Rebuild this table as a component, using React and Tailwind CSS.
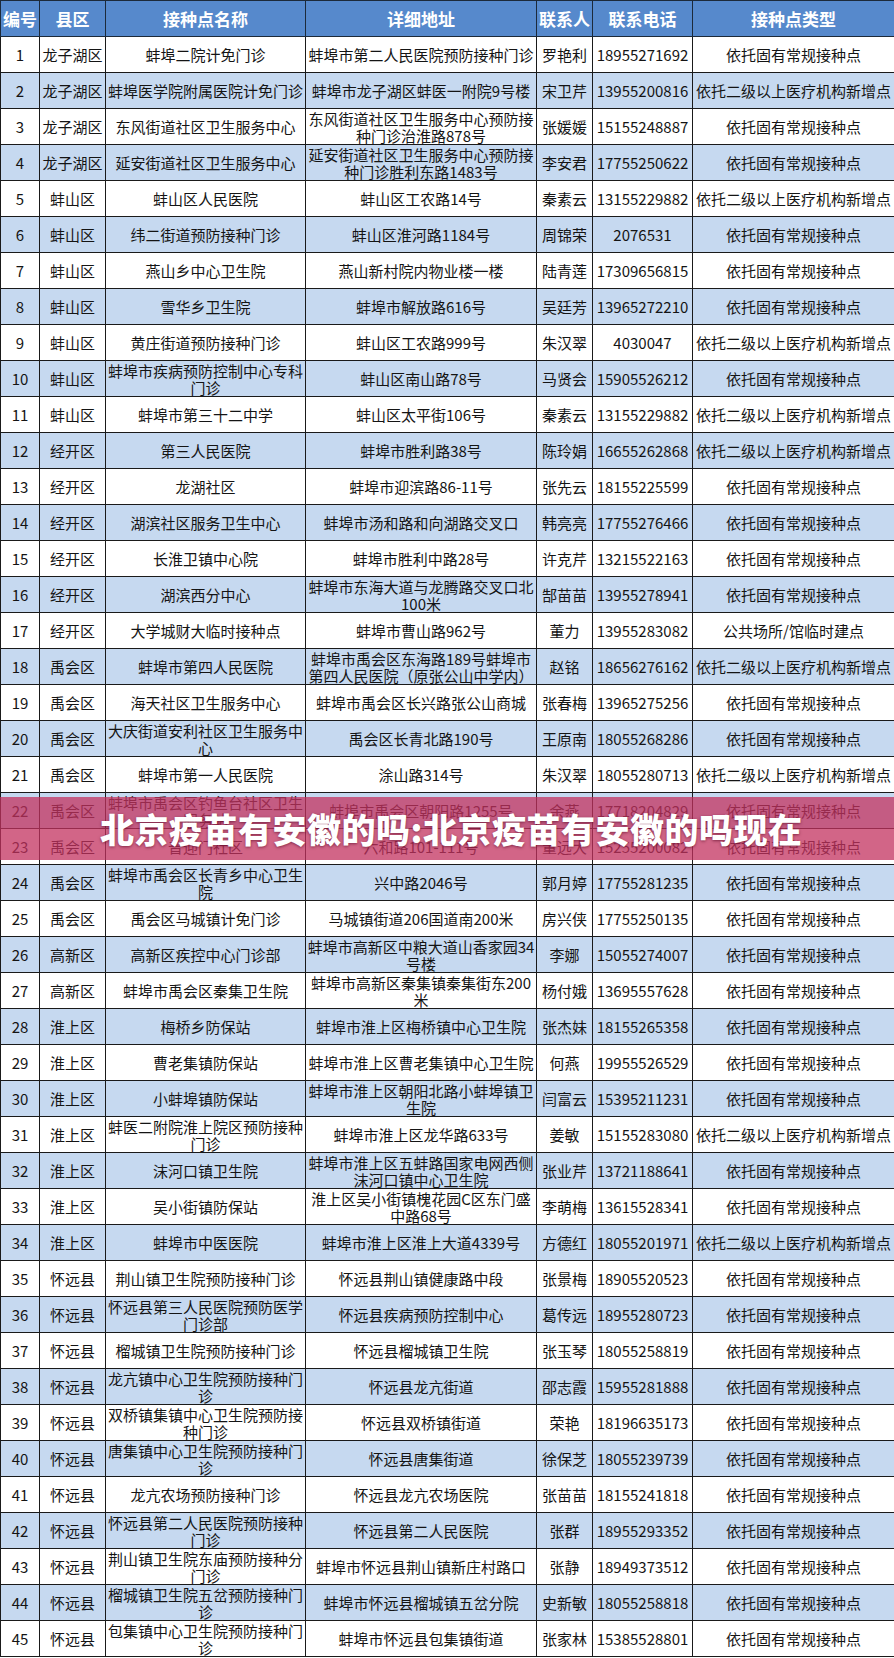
import React from "react"

const rows = [
  ["1", "龙子湖区", "蚌埠二院计免门诊", "蚌埠市第二人民医院预防接种门诊", "罗艳利", "18955271692", "依托固有常规接种点"],
  ["2", "龙子湖区", "蚌埠医学院附属医院计免门诊", "蚌埠市龙子湖区蚌医一附院9号楼", "宋卫芹", "13955200816", "依托二级以上医疗机构新增点"],
  ["3", "龙子湖区", "东风街道社区卫生服务中心", "东风街道社区卫生服务中心预防接种门诊治淮路878号", "张媛媛", "15155248887", "依托固有常规接种点"],
  ["4", "龙子湖区", "延安街道社区卫生服务中心", "延安街道社区卫生服务中心预防接种门诊胜利东路1483号", "李安君", "17755250622", "依托固有常规接种点"],
  ["5", "蚌山区", "蚌山区人民医院", "蚌山区工农路14号", "秦素云", "13155229882", "依托二级以上医疗机构新增点"],
  ["6", "蚌山区", "纬二街道预防接种门诊", "蚌山区淮河路1184号", "周锦荣", "2076531", "依托固有常规接种点"],
  ["7", "蚌山区", "燕山乡中心卫生院", "燕山新村院内物业楼一楼", "陆青莲", "17309656815", "依托固有常规接种点"],
  ["8", "蚌山区", "雪华乡卫生院", "蚌埠市解放路616号", "吴廷芳", "13965272210", "依托固有常规接种点"],
  ["9", "蚌山区", "黄庄街道预防接种门诊", "蚌山区工农路999号", "朱汉翠", "4030047", "依托二级以上医疗机构新增点"],
  ["10", "蚌山区", "蚌埠市疾病预防控制中心专科门诊", "蚌山区南山路78号", "马贤会", "15905526212", "依托固有常规接种点"],
  ["11", "蚌山区", "蚌埠市第三十二中学", "蚌山区太平街106号", "秦素云", "13155229882", "依托二级以上医疗机构新增点"],
  ["12", "经开区", "第三人民医院", "蚌埠市胜利路38号", "陈玲娟", "16655262868", "依托二级以上医疗机构新增点"],
  ["13", "经开区", "龙湖社区", "蚌埠市迎滨路86-11号", "张先云", "18155225599", "依托固有常规接种点"],
  ["14", "经开区", "湖滨社区服务卫生中心", "蚌埠市汤和路和向湖路交叉口", "韩亮亮", "17755276466", "依托固有常规接种点"],
  ["15", "经开区", "长淮卫镇中心院", "蚌埠市胜利中路28号", "许克芹", "13215522163", "依托固有常规接种点"],
  ["16", "经开区", "湖滨西分中心", "蚌埠市东海大道与龙腾路交叉口北100米", "郜苗苗", "13955278941", "依托固有常规接种点"],
  ["17", "经开区", "大学城财大临时接种点", "蚌埠市曹山路962号", "董力", "13955283082", "公共场所/馆临时建点"],
  ["18", "禹会区", "蚌埠市第四人民医院", "蚌埠市禹会区东海路189号蚌埠市第四人民医院（原张公山中学内）", "赵铭", "18656276162", "依托二级以上医疗机构新增点"],
  ["19", "禹会区", "海天社区卫生服务中心", "蚌埠市禹会区长兴路张公山商城", "张春梅", "13965275256", "依托固有常规接种点"],
  ["20", "禹会区", "大庆街道安利社区卫生服务中心", "禹会区长青北路190号", "王原南", "18055268286", "依托固有常规接种点"],
  ["21", "禹会区", "蚌埠市第一人民医院", "涂山路314号", "朱汉翠", "18055280713", "依托二级以上医疗机构新增点"],
  ["22", "禹会区", "蚌埠市禹会区钓鱼台社区卫生服务站", "蚌埠市禹会区朝阳路1255号", "余燕", "17718204829", "依托固有常规接种点"],
  ["23", "禹会区", "普迎门社区", "六和路101-111号", "董远大", "15255200082", "依托固有常规接种点"],
  ["24", "禹会区", "蚌埠市禹会区长青乡中心卫生院", "兴中路2046号", "郭月婷", "17755281235", "依托固有常规接种点"],
  ["25", "禹会区", "禹会区马城镇计免门诊", "马城镇街道206国道南200米", "房兴侠", "17755250135", "依托固有常规接种点"],
  ["26", "高新区", "高新区疾控中心门诊部", "蚌埠市高新区中粮大道山香家园34号楼", "李娜", "15055274007", "依托固有常规接种点"],
  ["27", "高新区", "蚌埠市禹会区秦集卫生院", "蚌埠市高新区秦集镇秦集街东200米", "杨付娥", "13695557628", "依托固有常规接种点"],
  ["28", "淮上区", "梅桥乡防保站", "蚌埠市淮上区梅桥镇中心卫生院", "张杰妹", "18155265358", "依托固有常规接种点"],
  ["29", "淮上区", "曹老集镇防保站", "蚌埠市淮上区曹老集镇中心卫生院", "何燕", "19955526529", "依托固有常规接种点"],
  ["30", "淮上区", "小蚌埠镇防保站", "蚌埠市淮上区朝阳北路小蚌埠镇卫生院", "闫富云", "15395211231", "依托固有常规接种点"],
  ["31", "淮上区", "蚌医二附院淮上院区预防接种门诊", "蚌埠市淮上区龙华路633号", "姜敏", "15155283080", "依托二级以上医疗机构新增点"],
  ["32", "淮上区", "沫河口镇卫生院", "蚌埠市淮上区五蚌路国家电网西侧沫河口镇中心卫生院", "张业芹", "13721188641", "依托固有常规接种点"],
  ["33", "淮上区", "吴小街镇防保站", "淮上区吴小街镇槐花园C区东门盛中路68号", "李萌梅", "13615528341", "依托固有常规接种点"],
  ["34", "淮上区", "蚌埠市中医医院", "蚌埠市淮上区淮上大道4339号", "方德红", "18055201971", "依托二级以上医疗机构新增点"],
  ["35", "怀远县", "荆山镇卫生院预防接种门诊", "怀远县荆山镇健康路中段", "张景梅", "18905520523", "依托固有常规接种点"],
  ["36", "怀远县", "怀远县第三人民医院预防医学门诊部", "怀远县疾病预防控制中心", "葛传远", "18955280723", "依托固有常规接种点"],
  ["37", "怀远县", "榴城镇卫生院预防接种门诊", "怀远县榴城镇卫生院", "张玉琴", "18055258819", "依托固有常规接种点"],
  ["38", "怀远县", "龙亢镇中心卫生院预防接种门诊", "怀远县龙亢街道", "邵志霞", "15955281888", "依托固有常规接种点"],
  ["39", "怀远县", "双桥镇集镇中心卫生院预防接种门诊", "怀远县双桥镇街道", "荣艳", "18196635173", "依托固有常规接种点"],
  ["40", "怀远县", "唐集镇中心卫生院预防接种门诊", "怀远县唐集街道", "徐保芝", "18055239739", "依托固有常规接种点"],
  ["41", "怀远县", "龙亢农场预防接种门诊", "怀远县龙亢农场医院", "张苗苗", "18155241818", "依托固有常规接种点"],
  ["42", "怀远县", "怀远县第二人民医院预防接种门诊", "怀远县第二人民医院", "张群", "18955293352", "依托固有常规接种点"],
  ["43", "怀远县", "荆山镇卫生院东庙预防接种分门诊", "蚌埠市怀远县荆山镇新庄村路口", "张静", "18949373512", "依托固有常规接种点"],
  ["44", "怀远县", "榴城镇卫生院五岔预防接种门诊", "蚌埠市怀远县榴城镇五岔分院", "史新敏", "18055258818", "依托固有常规接种点"],
  ["45", "怀远县", "包集镇中心卫生院预防接种门诊", "蚌埠市怀远县包集镇街道", "张家林", "15385528801", "依托固有常规接种点"],
]

const headers = ["编号", "县区", "接种点名称", "详细地址", "联系人", "联系电话", "接种点类型"]
const widths = ["w-[39px]", "w-[66px]", "w-[200px]", "w-[231px]", "w-[56px]", "w-[100px]", "w-[202px]"]

export default function App() {
  return (
    <div className="relative w-[894px] h-[1658px] bg-white text-[#141414] font-['Noto_Sans_CJK_SC',sans-serif]">
      <table className="table-fixed border-collapse w-[894px]">
        <colgroup>
          {widths.map((w, i) => <col key={i} className={w} />)}
        </colgroup>
        <thead>
          <tr className="h-9 bg-[#5689cc]">
            {headers.map((h) => (
              <th key={h} className="border border-[#1c2a3a] p-0 text-[17px] font-bold text-white whitespace-nowrap">
                {h}
              </th>
            ))}
          </tr>
        </thead>
        <tbody>
          {rows.map((r, i) => (
            <tr key={r[0]} className={i % 2 === 1 ? "h-9 bg-[#c6d9f0]" : "h-9 bg-white"}>
              {r.map((c, j) => (
                <td key={j} className="border border-[#1a1a1a] p-0 text-center align-middle text-[15px] leading-[17px]">
                  {c}
                </td>
              ))}
            </tr>
          ))}
        </tbody>
      </table>

      {/* watermark banner over the table */}
      <div className="absolute left-0 top-[797px] w-[894px] h-[63px] bg-[rgba(195,50,95,0.75)] flex items-center">
        <span className="pl-[100px] text-[34px] font-black text-white tracking-[0.5px] [text-shadow:0_1px_3px_rgba(80,0,30,0.6)]">
          北京疫苗有安徽的吗:北京疫苗有安徽的吗现在
        </span>
      </div>
    </div>
  )
}
